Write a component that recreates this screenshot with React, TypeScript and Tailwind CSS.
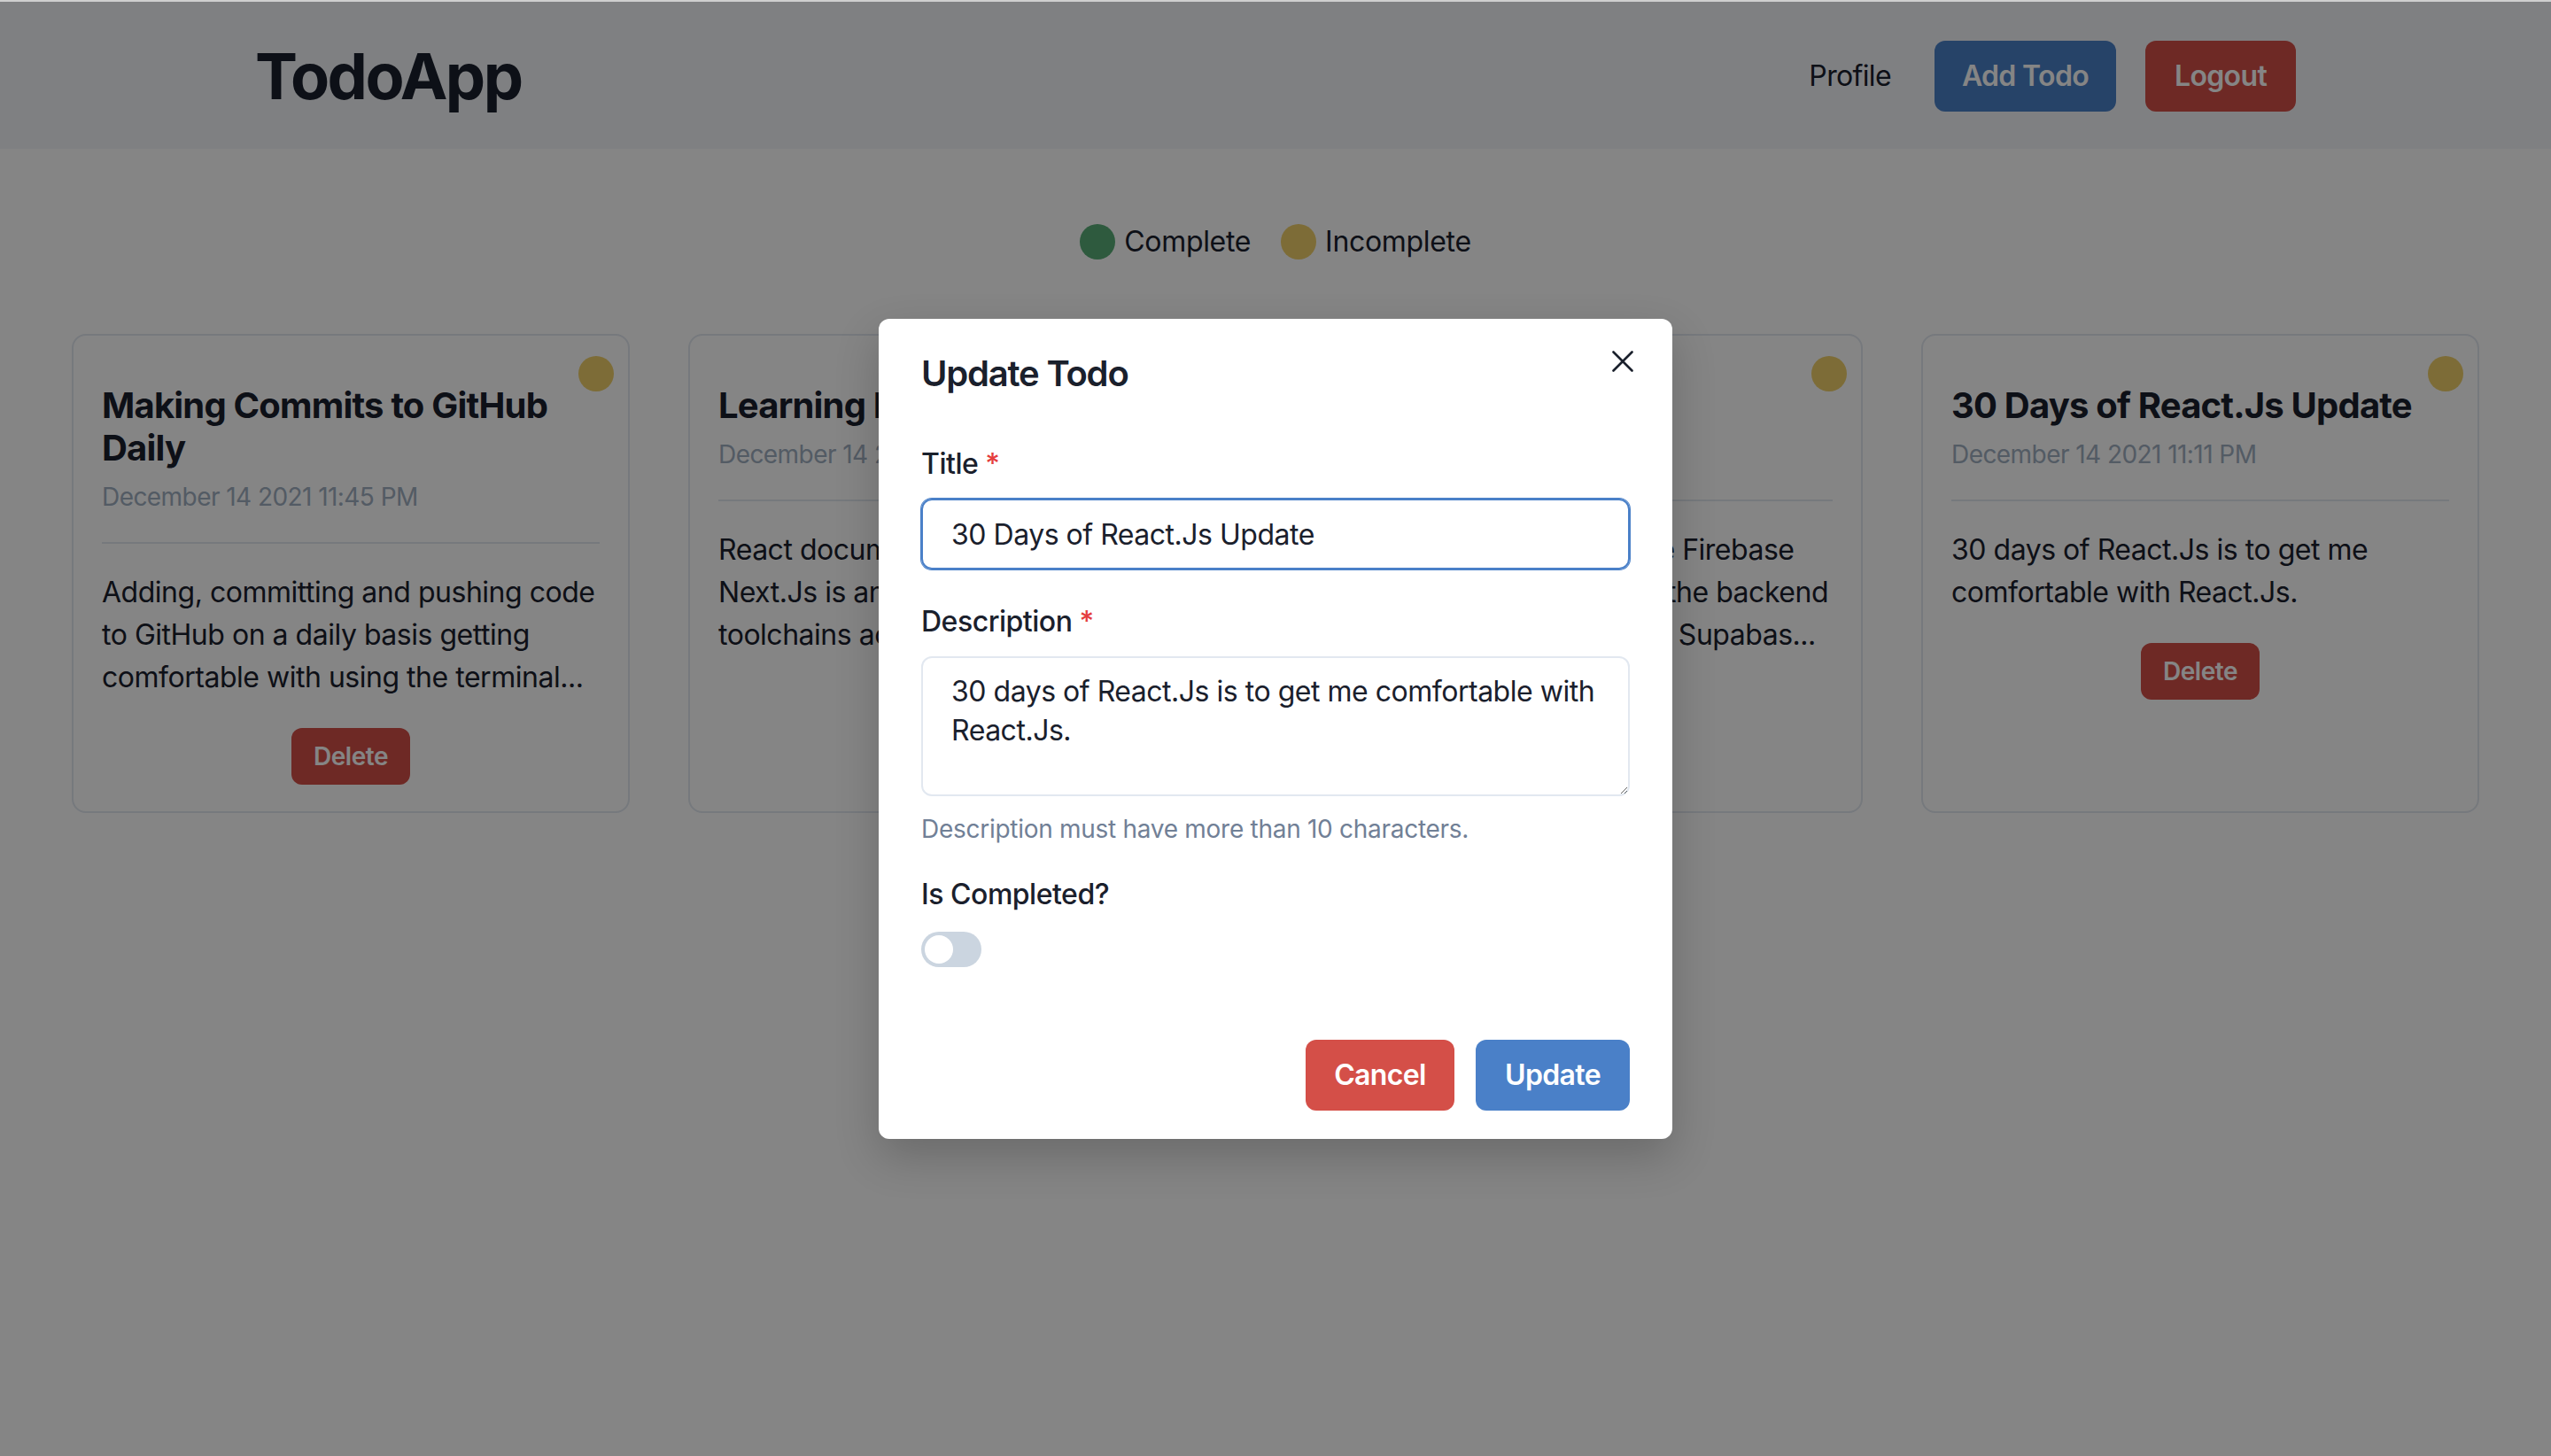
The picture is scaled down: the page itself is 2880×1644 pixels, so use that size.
import React from "react";

type Todo = {
  title: string;
  date: string;
  lines: string[];
};

const todos: Todo[] = [
  {
    title: "Making Commits to GitHub Daily",
    date: "December 14 2021 11:45 PM",
    lines: [
      "Adding, committing and pushing code",
      "to GitHub on a daily basis getting",
      "comfortable with using the terminal...",
    ],
  },
  {
    title: "Learning Next.Js",
    date: "December 14 2021 11:30 PM",
    lines: [
      "React documentation recommends",
      "Next.Js is an awesome framework",
      "toolchains according to the docs...",
    ],
  },
  {
    title: "Supabase Backend",
    date: "December 14 2021 11:20 PM",
    lines: [
      "Supabase works quite like Firebase",
      "alternative and it handles the backend",
      "for your very next project. Supabas...",
    ],
  },
  {
    title: "30 Days of React.Js Update",
    date: "December 14 2021 11:11 PM",
    lines: ["30 days of React.Js is to get me", "comfortable with React.Js."],
  },
];

function TodoCard({ todo }: { todo: Todo }) {
  return (
    <div className="relative flex flex-col rounded-[16px] border-2 border-[#e2e8f0] bg-white px-[32px] pb-[30px] pt-[55px]">
      <div className="absolute right-[16px] top-[23px] h-[40px] w-[40px] rounded-full bg-[#f0d06a]" />
      <h2 className="text-[40px] font-bold leading-[48px] tracking-[-0.02em] text-[#1a202c]">{todo.title}</h2>
      <p className="mt-[10px] text-[28px] leading-[42px] tracking-[-0.02em] text-[#a0aec0]">{todo.date}</p>
      <div className="mt-[30px] h-[2px] w-full bg-[#e2e8f0]" />
      <div className="mt-[31px] text-[32px] leading-[48px] text-[#1a202c]">
        {todo.lines.map((l, i) => (
          <div key={i} className="whitespace-nowrap">
            {l}
          </div>
        ))}
      </div>
      <button className="mx-auto mt-[33px] flex h-[64px] w-[134px] items-center justify-center rounded-[12px] bg-[#d44f48] text-[28px] font-semibold text-white">
        Delete
      </button>
    </div>
  );
}

function FieldLabel({ text, required, className }: { text: string; required?: boolean; className: string }) {
  return (
    <div className={"flex items-start text-[32px] font-medium leading-[48px] text-[#1a202c] " + className}>
      <span>{text}</span>
      {required ? <span className="ml-[8px] text-[#e53e3e]">*</span> : null}
    </div>
  );
}

export default function App() {
  return (
    <div className="flex min-h-[1644px] flex-col bg-white font-['Inter',sans-serif] tracking-[-0.03em]">
      <div className="h-[2px] w-full bg-[#cfcfcf]" />
      <div className="relative flex-1">
        <header className="flex h-[166px] items-center justify-between bg-[#f4f6fa] px-[288px] pt-[2px]">
          <h1 className="text-[72px] font-bold leading-[80px] tracking-[-0.035em] text-[#1a202c]">TodoApp</h1>
          <nav className="flex items-center">
            <span className="mr-[49px] text-[32px] leading-[48px] tracking-[-0.02em] text-[#1a202c]">Profile</span>
            <button className="flex h-[80px] w-[205px] items-center justify-center rounded-[12px] bg-[#4a80c8] text-[32px] font-semibold tracking-[-0.02em] text-white">
              Add Todo
            </button>
            <button className="ml-[33px] flex h-[80px] w-[170px] items-center justify-center rounded-[12px] bg-[#d44f48] text-[32px] font-semibold tracking-[-0.02em] text-white">
              Logout
            </button>
          </nav>
        </header>

        <div className="mt-[81px] flex items-center justify-center tracking-[-0.02em]">
          <span className="h-[40px] w-[40px] rounded-full bg-[#58ad77]" />
          <span className="ml-[10px] text-[32px] leading-[48px] text-[#1a202c]">Complete</span>
          <span className="ml-[34px] h-[40px] w-[40px] rounded-full bg-[#f0d06a]" />
          <span className="ml-[10px] text-[32px] leading-[48px] text-[#1a202c]">Incomplete</span>
        </div>

        <div className="mt-[80px] grid grid-cols-4 gap-x-[66px] px-[81px]">
          {todos.map((t, i) => (
            <TodoCard key={i} todo={t} />
          ))}
        </div>

        <div className="absolute inset-0 bg-[rgba(0,0,0,0.48)]" />

        <div className="absolute inset-0 flex items-center justify-center">
          <div className="relative w-[896px] rounded-[12px] bg-white shadow-[0_20px_50px_rgba(0,0,0,0.2)]">
            <div className="px-[48px] pt-[38px]">
              <h2 className="text-[40px] font-semibold leading-[48px] tracking-[-0.03em] text-[#1a202c]">Update Todo</h2>
            </div>
            <button className="absolute right-[24px] top-[16px] flex h-[64px] w-[64px] items-center justify-center rounded-[12px]">
              <svg width="24" height="24" viewBox="0 0 24 24" fill="none">
                <path d="M1.5 1.5L22.5 22.5M22.5 1.5L1.5 22.5" stroke="#1a202c" strokeWidth="2.6" strokeLinecap="round" />
              </svg>
            </button>
            <div className="px-[48px]">
              <FieldLabel text="Title" required className="mt-[54px]" />
              <input
                className="mt-[15px] block h-[80px] w-full rounded-[12px] border-2 border-[#4a80c8] px-[32px] text-[32px] text-[#1a202c] shadow-[0_0_0_1px_#4a80c8] outline-none"
                defaultValue="30 Days of React.Js Update"
              />
              <FieldLabel text="Description" required className="mt-[35px]" />
              <textarea
                className="mt-[15px] block h-[158px] w-full resize-y rounded-[12px] border-2 border-[#e2e8f0] px-[32px] py-[16px] text-[32px] leading-[44px] text-[#1a202c] outline-none"
                defaultValue={"30 days of React.Js is to get me comfortable with\nReact.Js."}
              />
              <p className="mt-[16px] text-[28px] leading-[42px] tracking-[-0.01em] text-[#718096]">
                Description must have more than 10 characters.
              </p>
              <FieldLabel text="Is Completed?" className="mt-[29px]" />
              <div className="mt-[18px] flex h-[40px] w-[68px] items-center rounded-full bg-[#cbd5e0] p-[4px]">
                <span className="h-[32px] w-[32px] rounded-full bg-white" />
              </div>
            </div>
            <div className="mt-[82px] flex justify-end gap-[24px] px-[48px] pb-[32px]">
              <button className="flex h-[80px] w-[168px] items-center justify-center rounded-[12px] bg-[#d44f48] text-[32px] font-semibold tracking-[-0.02em] text-white">
                Cancel
              </button>
              <button className="flex h-[80px] w-[174px] items-center justify-center rounded-[12px] bg-[#4a80c8] text-[32px] font-semibold tracking-[-0.02em] text-white">
                Update
              </button>
            </div>
          </div>
        </div>
      </div>
    </div>
  );
}
